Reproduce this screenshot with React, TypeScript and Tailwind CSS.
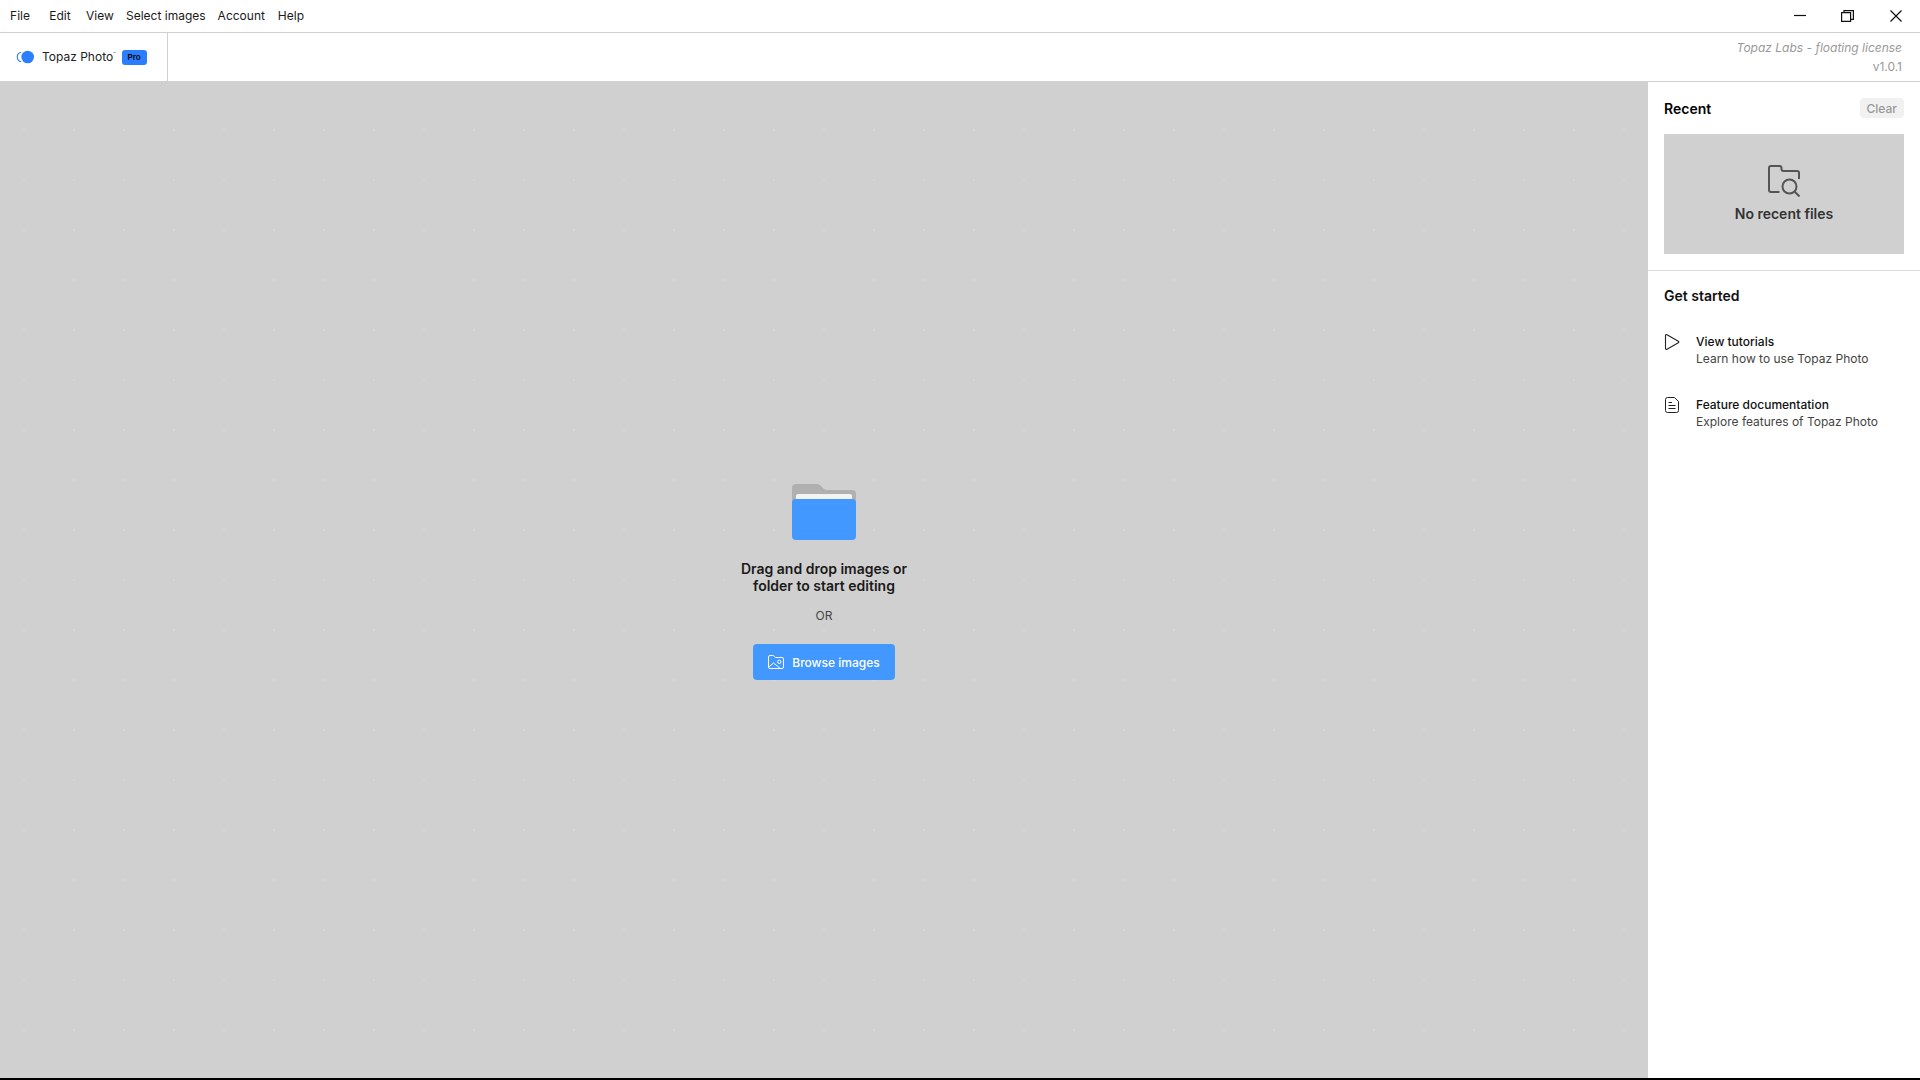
import React from "react";

const menuItems = ["File", "Edit", "View", "Select images", "Account", "Help"];

function LogoMark() {
  return (
    <svg width="18" height="14" viewBox="0 0 18 14" fill="none" aria-hidden="true">
      <path d="M5.200 2.200A4.900 4.900 0 0 0 5.200 11.800" stroke="#2b7fff" strokeWidth="1.100" />
      <circle cx="11.700" cy="7" r="6.300" fill="#2b7fff" />
    </svg>
  );
}

function FolderArt() {
  return (
    <svg width="64" height="56" viewBox="0 0 64 56" aria-hidden="true">
      <path d="M0 4a4 4 0 0 1 4-4h20.500c1.500 0 2.800.4 4 1.400L32 5c.8.7 1.800 1 3 1h25a4 4 0 0 1 4 4v12H0z" fill="#b0b0b0" />
      <path d="M4 12a2 2 0 0 1 2-2h52a2 2 0 0 1 2 2v10H4z" fill="#f3f3f3" />
      <rect y="15" width="64" height="41" rx="4" fill="#4298ff" />
    </svg>
  );
}

function FolderSearchIcon() {
  return (
    <svg width="32" height="32" viewBox="0 0 32 32" fill="none" stroke="#555" strokeWidth="2" aria-hidden="true">
      <path d="M11.500 27H3a2 2 0 0 1-2-2V3a2 2 0 0 1 2-2h8.500a2 2 0 0 1 2 2v1a2 2 0 0 0 2 2H29a2 2 0 0 1 2 2v6" />
      <circle cx="21.500" cy="21.500" r="7" />
      <path d="M26.500 26.500l5 5" />
    </svg>
  );
}

function FolderImageIcon() {
  return (
    <svg width="16" height="16" viewBox="0 0 16 16" fill="none" stroke="#fff" strokeWidth="1" strokeLinejoin="round" aria-hidden="true">
      <path d="M.5 3A1.500 1.500 0 0 1 2 1.500h3.500L7.500 3.500H14A1.500 1.500 0 0 1 15.500 5v8a1.500 1.500 0 0 1-1.500 1.500H2A1.500 1.500 0 0 1 .5 13z" />
      <circle cx="11.300" cy="7.800" r="1.700" />
      <path d="M.7 13l4.800-4 6.500 5.300" />
    </svg>
  );
}

function PlayIcon() {
  return (
    <svg width="16" height="16" viewBox="0 0 16 16" fill="none" stroke="#222" strokeWidth="1.100" strokeLinejoin="round" aria-hidden="true">
      <path d="M1.500 1.600v12.800c0 .9.800 1.300 1.500.9l11.300-6.500c.7-.4.700-1.200 0-1.600L3 .7c-.7-.4-1.500 0-1.500.9z" />
    </svg>
  );
}

function DocumentIcon() {
  return (
    <svg width="16" height="16" viewBox="0 0 16 16" fill="none" stroke="#222" strokeWidth="1" strokeLinejoin="round" aria-hidden="true">
      <path d="M3.500.5h7l4 4v9a2 2 0 0 1-2 2h-9a2 2 0 0 1-2-2v-11a2 2 0 0 1 2-2z" />
      <path d="M4.500 5.500H8M4.500 8.500h7M4.500 11.500h7" />
    </svg>
  );
}

function MenuBar() {
  return (
    <div className="flex h-[33px] items-stretch justify-between border-b border-[#d0d0d0]">
      <nav className="flex" aria-label="Main menu">
        {menuItems.map((item) => (
          <button key={item} className="min-w-10 px-[6px] pb-px text-center text-xs text-[#1a1a1a]">
            {item}
          </button>
        ))}
      </nav>
      <div className="flex">
        <button aria-label="Minimize" className="grid w-12 place-items-center">
          <svg width="12" height="12" viewBox="0 0 12 12" stroke="#111" strokeWidth="1.200">
            <path d="M0 5.500h12" />
          </svg>
        </button>
        <button aria-label="Restore" className="grid w-12 place-items-center">
          <svg width="14" height="12" viewBox="0 0 14 12" fill="none" stroke="#111" strokeWidth="1.200">
            <path d="M.6 2.600h9v8.800h-9zM3 2.500V.6h9.400v8.800H9.800" />
          </svg>
        </button>
        <button aria-label="Close" className="grid w-12 place-items-center">
          <svg width="12" height="12" viewBox="0 0 12 12" stroke="#111" strokeWidth="1.200">
            <path d="M.5.5l11 11M11.500.5l-11 11" />
          </svg>
        </button>
      </div>
    </div>
  );
}

function Header() {
  return (
    <header className="flex h-[49px] items-stretch justify-between border-b border-[#d0d0d0]">
      <div className="flex w-[168px] items-center border-r border-[#d0d0d0] pl-4">
        <LogoMark />
        <span className="ml-2 flex items-start text-xs leading-4 text-[#222]">
          Topaz Photo<span className="text-[4px] leading-[10px]">™</span>
        </span>
        <span className="ml-[6px] flex h-[15px] w-[25px] items-center justify-center rounded-[3px] bg-[#2b7fff] text-[8px] font-semibold text-black">
          Pro
        </span>
      </div>
      <div className="flex flex-col items-end justify-center gap-1 pr-[18px] text-xs leading-[15px] text-[#999]">
        <span className="italic">Topaz Labs - floating license</span>
        <span>v1.0.1</span>
      </div>
    </header>
  );
}

function DropZone() {
  return (
    <main className="flex flex-1 flex-col items-center justify-center bg-[#d0d0d0] bg-[radial-gradient(circle,#d6d6d6_1px,transparent_1px)] bg-[size:50px_50px] bg-center pt-1">
      <FolderArt />
      <p className="mt-5 text-center text-sm leading-[17px] font-semibold text-[#1a1a1a]">
        Drag and drop images or
        <br />
        folder to start editing
      </p>
      <p className="mt-[14px] text-xs leading-[15px] text-[#444]">OR</p>
      <button className="mt-[21px] flex h-9 items-center gap-2 rounded bg-[#4298ff] px-[15px] text-xs font-medium text-white">
        <FolderImageIcon />
        <span className="pt-px">Browse images</span>
      </button>
    </main>
  );
}

function GuideLink({ icon, title, text }: { icon: React.ReactNode; title: string; text: string }) {
  return (
    <a href="#" className="flex gap-4">
      <span className="shrink-0 pt-px">{icon}</span>
      <span className="flex flex-col text-xs leading-[17px]">
        <span className="font-medium text-[#111]">{title}</span>
        <span className="text-[#444]">{text}</span>
      </span>
    </a>
  );
}

function Sidebar() {
  return (
    <aside className="w-[272px] shrink-0 bg-white">
      <section className="border-b border-[#dcdcdc] p-4">
        <div className="flex h-5 items-center justify-between">
          <h2 className="pt-px text-sm leading-5 font-semibold text-black">Recent</h2>
          <button className="h-5 rounded bg-[#f1f1f1] px-[7px] pt-px text-xs font-medium text-[#999]">Clear</button>
        </div>
        <div className="mt-4 flex h-[120px] flex-col items-center justify-center gap-2 bg-[#d0d0d0] pb-[2px]">
          <FolderSearchIcon />
          <p className="text-sm leading-[17px] font-semibold text-[#333]">No recent files</p>
        </div>
      </section>
      <section className="px-4 pt-[15px]">
        <h2 className="text-sm leading-5 font-semibold text-[#111]">Get started</h2>
        <div className="mt-[27px] flex flex-col gap-[29px]">
          <GuideLink icon={<PlayIcon />} title="View tutorials" text="Learn how to use Topaz Photo" />
          <GuideLink icon={<DocumentIcon />} title="Feature documentation" text="Explore features of Topaz Photo" />
        </div>
      </section>
    </aside>
  );
}

export default function App() {
  return (
    <div className="flex min-h-screen flex-col border-b-2 border-black bg-white font-['Inter',sans-serif]">
      <MenuBar />
      <Header />
      <div className="flex flex-1">
        <DropZone />
        <Sidebar />
      </div>
    </div>
  );
}
